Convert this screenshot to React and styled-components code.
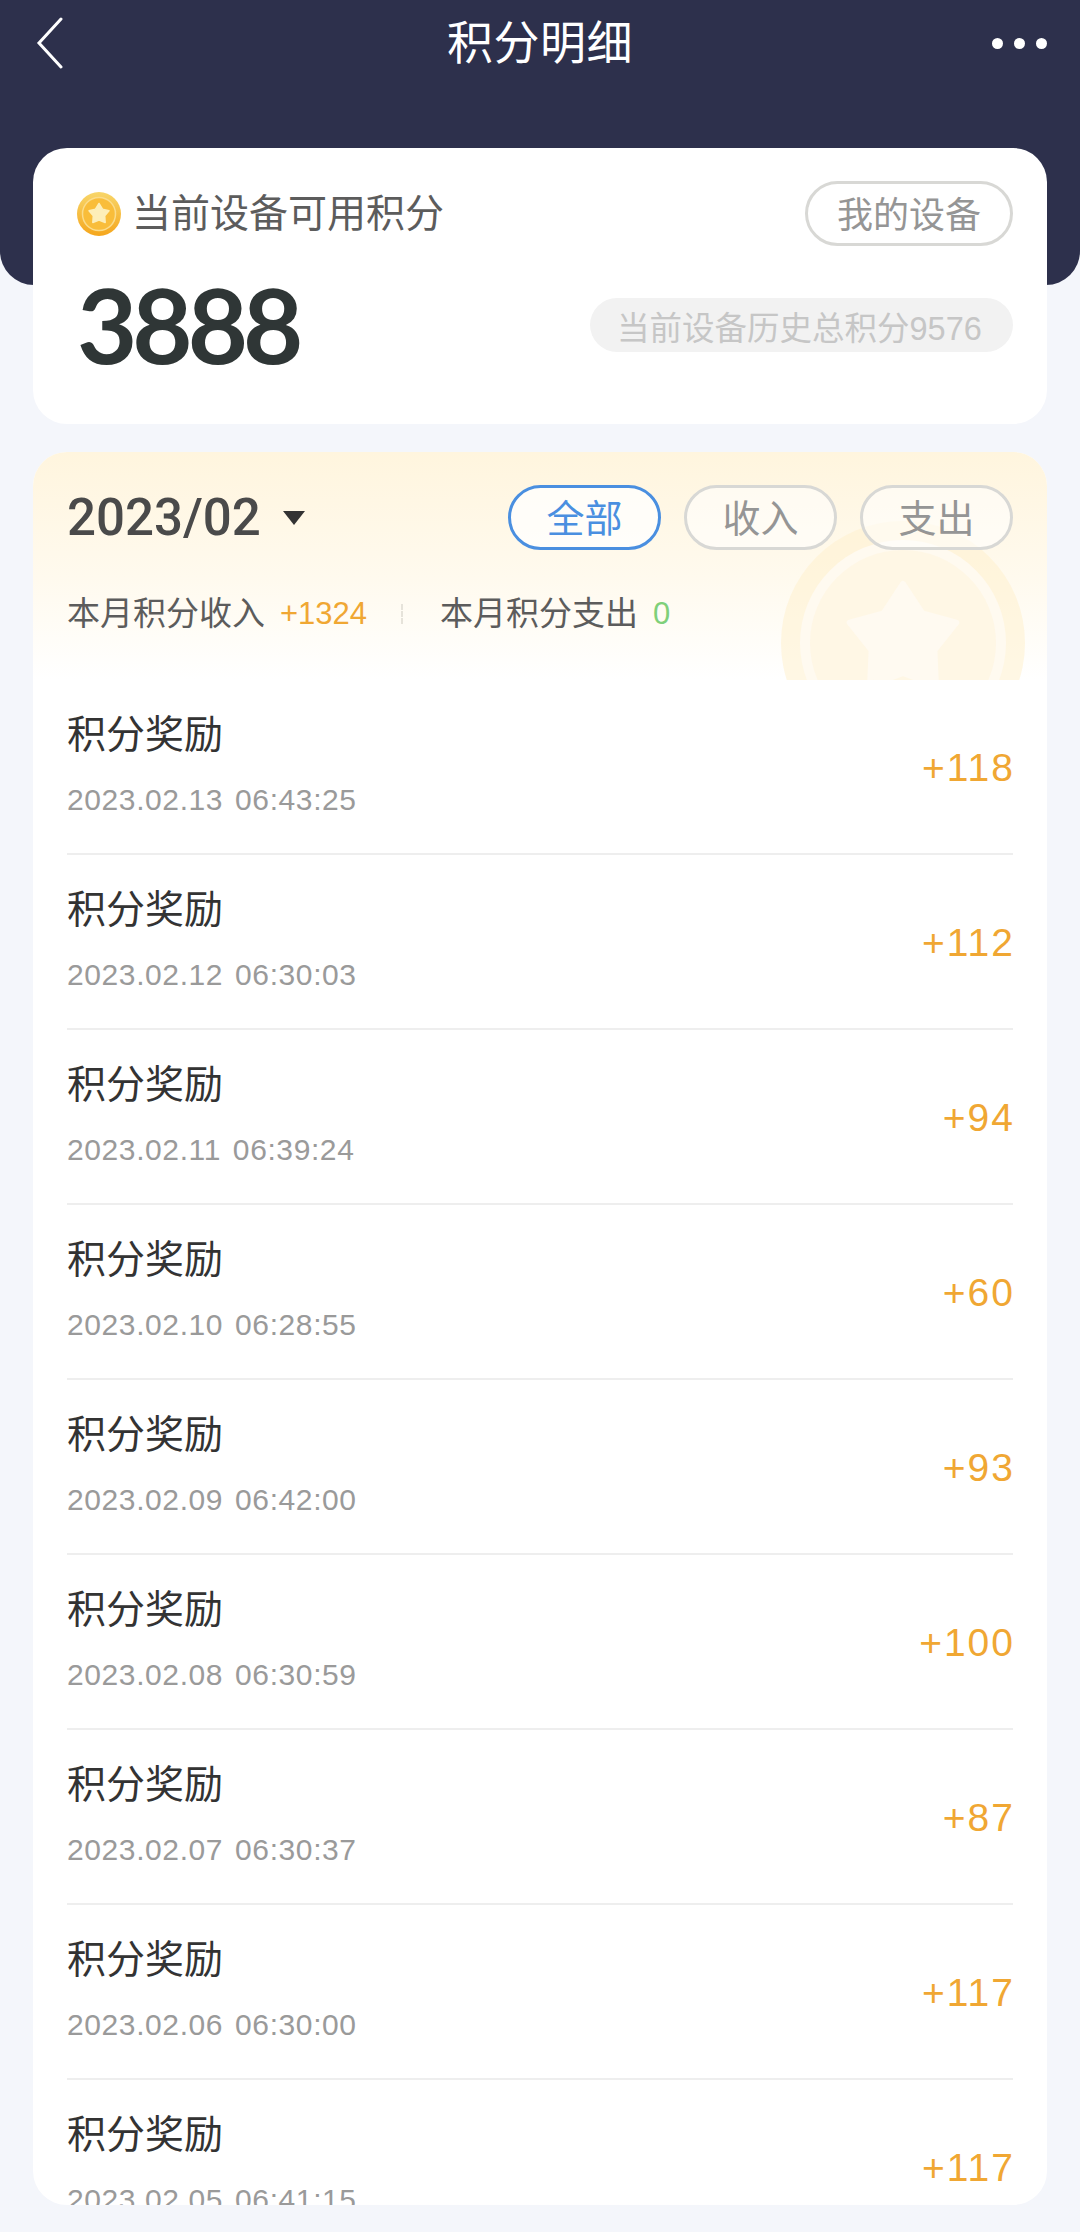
import React from "react";
import styled, { createGlobalStyle } from "styled-components";

const GlobalStyle = createGlobalStyle`
  html, body {
    margin: 0;
    padding: 0;
    background: #f4f6fb;
  }
  body {
    font-family: "Liberation Sans", "Noto Sans CJK SC", sans-serif;
  }
`;

const Page = styled.div`
  width: 1080px;
  height: 2232px;
  overflow: hidden;
  background: #f4f6fb;
`;

const NavBar = styled.div`
  height: 285px;
  box-sizing: border-box;
  padding: 0 33px 0 36px;
  background: #2d304c;
  border-radius: 0 0 34px 34px;
`;

const NavRow = styled.div`
  height: 86px;
  display: flex;
  align-items: center;
  justify-content: space-between;
`;

const NavTitle = styled.div`
  font-size: 46px;
  line-height: 56px;
  letter-spacing: 0.5px;
  color: #fff;
  margin-left: 24px;
`;

const Dots = styled.div`
  display: flex;
  gap: 11px;
  span {
    width: 11px;
    height: 11px;
    border-radius: 50%;
    background: #fff;
  }
`;

const Content = styled.div`
  margin-top: -137px;
  padding: 0 33px;
  display: flex;
  flex-direction: column;
  gap: 28px;
`;

const PointsCard = styled.div`
  height: 276px;
  box-sizing: border-box;
  padding: 33px 34px 0 44px;
  background: #fff;
  border-radius: 34px;
`;

const CardRow = styled.div`
  display: flex;
  align-items: center;
  justify-content: space-between;
`;

const BalanceRow = styled(CardRow)`
  margin-top: 28px;
`;

const PointsLabel = styled.div`
  display: flex;
  align-items: center;
  gap: 11px;
  font-size: 39px;
  line-height: 46px;
  color: #5c5c5c;
`;

const Pill = styled.div`
  box-sizing: border-box;
  width: ${props => props.$width}px;
  height: 65px;
  padding-bottom: 4px;
  display: flex;
  align-items: center;
  justify-content: center;
  border: 3px solid ${props => (props.$active ? "#4a8fe0" : "#d8d8d5")};
  border-radius: 33px;
  font-size: ${props => props.$size}px;
  color: ${props => (props.$active ? "#4a8fe0" : "#959595")};
  background: ${props => (props.$active ? "rgba(255,255,255,.75)" : "rgba(255,255,255,.55)")};
`;

const Balance = styled.div`
  font-family: "Lato", "Liberation Sans", sans-serif;
  font-size: 104px;
  line-height: 100px;
  padding-bottom: 2px;
  font-weight: 700;
  letter-spacing: -5px;
  color: #2f3636;
`;

const HistoryPill = styled.div`
  box-sizing: border-box;
  width: 423px;
  height: 54px;
  padding-left: 27px;
  display: flex;
  align-items: center;
  border-radius: 27px;
  background: #f2f2f2;
  font-size: 32.5px;
  color: #c6c6c6;
`;

const DetailCard = styled.div`
  height: 1753px;
  overflow: hidden;
  background: #fff;
  border-radius: 34px;
`;

const DetailHead = styled.div`
  position: relative;
  height: 228px;
  box-sizing: border-box;
  padding: 33px 34px 0;
  overflow: hidden;
  background: linear-gradient(180deg, #fff5de 0%, #fffaee 55%, #ffffff 100%);
`;

const Watermark = styled.svg`
  position: absolute;
  left: 747px;
  top: 68px;
`;

const HeadRow = styled.div`
  position: relative;
  display: flex;
  align-items: center;
  justify-content: space-between;
`;

const MonthPicker = styled.div`
  display: flex;
  align-items: center;
  gap: 22px;
  font-family: "Roboto", "Liberation Sans", sans-serif;
  font-size: 51px;
  font-weight: 500;
  color: #4a4a4a;
`;

const Caret = styled.div`
  width: 0;
  height: 0;
  border-left: 11px solid transparent;
  border-right: 11px solid transparent;
  border-top: 14px solid #333;
`;

const Tabs = styled.div`
  display: flex;
  gap: 23px;
`;

const Stats = styled.div`
  position: relative;
  margin-top: 42px;
  display: flex;
  align-items: center;
  font-size: 33px;
  line-height: 44px;
  color: #5c5c5c;
`;

const StatValue = styled.span`
  margin-left: 15px;
  font-size: 31px;
  color: ${props => props.$color};
`;

const StatDivider = styled.div`
  width: 0;
  height: 20px;
  margin: 0 37px 0 34px;
  border-left: 2px dashed #e6e3da;
`;

const List = styled.div`
  padding: 0 34px;
`;

const Row = styled.div`
  height: 175px;
  box-sizing: border-box;
  display: flex;
  align-items: center;
  justify-content: space-between;
  border-bottom: 2px solid #eeeeee;
`;

const RowInfo = styled.div`
  display: flex;
  flex-direction: column;
  gap: 22px;
  margin-top: -2px;
`;

const RowTitle = styled.div`
  font-size: 39px;
  line-height: 46px;
  color: #333;
`;

const RowDate = styled.div`
  font-size: 30px;
  line-height: 40px;
  letter-spacing: 0.6px;
  word-spacing: 3px;
  color: #9a9a9a;
`;

const RowAmount = styled.div`
  margin-top: 2px;
  margin-right: -2px;
  font-size: 39px;
  letter-spacing: 2px;
  color: #f0a733;
`;

const records = [
  ["2023.02.13 06:43:25", "+118"],
  ["2023.02.12 06:30:03", "+112"],
  ["2023.02.11 06:39:24", "+94"],
  ["2023.02.10 06:28:55", "+60"],
  ["2023.02.09 06:42:00", "+93"],
  ["2023.02.08 06:30:59", "+100"],
  ["2023.02.07 06:30:37", "+87"],
  ["2023.02.06 06:30:00", "+117"],
  ["2023.02.05 06:41:15", "+117"],
];

const starPoints = (cx, cy, outer, inner) =>
  Array.from({ length: 10 }, (_, i) => {
    const r = i % 2 ? inner : outer;
    const a = (Math.PI / 5) * i - Math.PI / 2;
    return `${cx + r * Math.cos(a)},${cy + r * Math.sin(a)}`;
  }).join(" ");

const BackIcon = () => (
  <svg width="28" height="52" viewBox="0 0 28 52" fill="none">
    <path d="M25 2 L3 26 L25 50" stroke="#fff" strokeWidth="3" strokeLinecap="round" strokeLinejoin="miter" />
  </svg>
);

const Coin = () => (
  <svg width="44" height="44" viewBox="0 0 44 44">
    <defs>
      <linearGradient id="coinFace" x1="0" y1="0" x2="0" y2="1">
        <stop offset="0" stopColor="#f8d66a" />
        <stop offset="1" stopColor="#f5a61c" />
      </linearGradient>
    </defs>
    <circle cx="22" cy="22" r="22" fill="url(#coinFace)" />
    <circle cx="22" cy="22" r="16.5" fill="#f9bd3a" stroke="#fbdc8a" strokeWidth="1.5" />
    <polygon points={starPoints(22, 22, 10.5, 6)} fill="#fdeeb8" strokeLinejoin="round" stroke="#fdeeb8" strokeWidth="1.5" />
  </svg>
);

const WatermarkCoin = () => (
  <Watermark width="246" height="246" viewBox="0 0 246 246">
    <circle cx="123" cy="123" r="122" fill="#fff0cd" opacity="0.55" />
    <circle cx="123" cy="123" r="103" fill="#fffaf0" />
    <circle cx="123" cy="123" r="93" fill="#fff4dd" opacity="0.55" />
    <polygon
      points={starPoints(123, 120, 56, 33)}
      fill="#fffaf1"
      stroke="#fffaf1"
      strokeWidth="6"
      strokeLinejoin="round"
    />
  </Watermark>
);

export default function App() {
  return (
    <Page>
      <GlobalStyle />
      <NavBar>
        <NavRow>
          <BackIcon />
          <NavTitle>积分明细</NavTitle>
          <Dots>
            <span />
            <span />
            <span />
          </Dots>
        </NavRow>
      </NavBar>
      <Content>
        <PointsCard>
          <CardRow>
            <PointsLabel>
              <Coin />
              当前设备可用积分
            </PointsLabel>
            <Pill $width={208} $size={36}>我的设备</Pill>
          </CardRow>
          <BalanceRow>
            <Balance>3888</Balance>
            <HistoryPill>当前设备历史总积分9576</HistoryPill>
          </BalanceRow>
        </PointsCard>
        <DetailCard>
          <DetailHead>
            <WatermarkCoin />
            <HeadRow>
              <MonthPicker>
                2023/02
                <Caret />
              </MonthPicker>
              <Tabs>
                <Pill $width={153} $size={38} $active>全部</Pill>
                <Pill $width={153} $size={38}>收入</Pill>
                <Pill $width={153} $size={38}>支出</Pill>
              </Tabs>
            </HeadRow>
            <Stats>
              本月积分收入
              <StatValue $color="#f0a733">+1324</StatValue>
              <StatDivider />
              本月积分支出
              <StatValue $color="#7fd07a">0</StatValue>
            </Stats>
          </DetailHead>
          <List>
            {records.map(([date, amount]) => (
              <Row key={date}>
                <RowInfo>
                  <RowTitle>积分奖励</RowTitle>
                  <RowDate>{date}</RowDate>
                </RowInfo>
                <RowAmount>{amount}</RowAmount>
              </Row>
            ))}
          </List>
        </DetailCard>
      </Content>
    </Page>
  );
}
